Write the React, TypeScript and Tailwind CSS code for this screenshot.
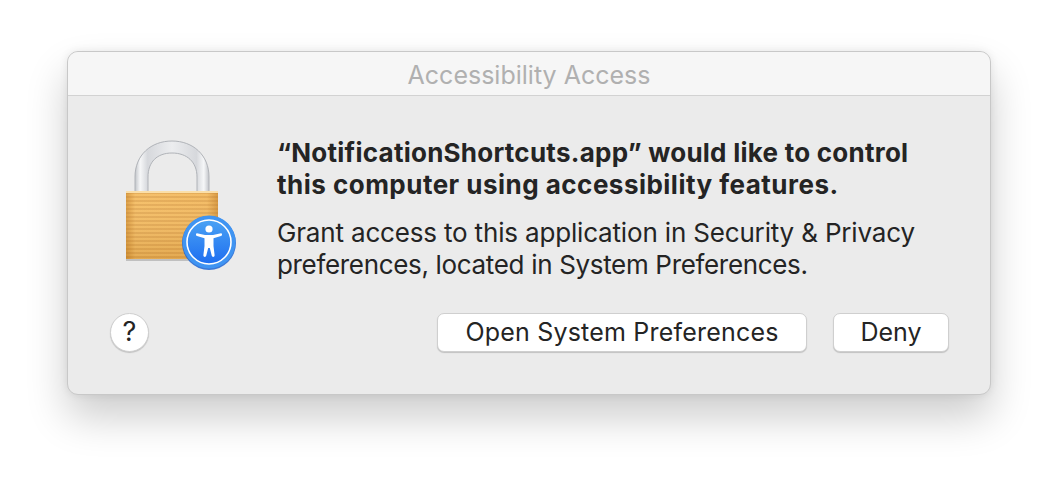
import React from "react";

const LockIcon = () => (
  <svg width="120" height="132" viewBox="0 0 120 132" className="block">
    <defs>
      <linearGradient id="shackle" x1="0" y1="0" x2="1" y2="0">
        <stop offset="0" stopColor="#c2c5ca" />
        <stop offset="0.07" stopColor="#f6f7f8" />
        <stop offset="0.17" stopColor="#d6d8dc" />
        <stop offset="0.5" stopColor="#ecedef" />
        <stop offset="0.83" stopColor="#d6d8dc" />
        <stop offset="0.93" stopColor="#f6f7f8" />
        <stop offset="1" stopColor="#c2c5ca" />
      </linearGradient>
      <linearGradient id="body" x1="0" y1="0" x2="1" y2="0">
        <stop offset="0" stopColor="#d9983a" />
        <stop offset="0.1" stopColor="#f5bd62" />
        <stop offset="0.88" stopColor="#f3b95e" />
        <stop offset="1" stopColor="#d69438" />
      </linearGradient>
      <linearGradient id="shade" x1="0" y1="0" x2="0" y2="1">
        <stop offset="0" stopColor="#ffffff" stopOpacity="0.05" />
        <stop offset="1" stopColor="#a86c1c" stopOpacity="0.22" />
      </linearGradient>
      <pattern id="ridges" width="4" height="4" patternUnits="userSpaceOnUse">
        <rect width="4" height="2" fill="#b06e20" opacity="0.24" />
      </pattern>
      <linearGradient id="badge" x1="0" y1="0" x2="0" y2="1">
        <stop offset="0" stopColor="#4aa2f4" />
        <stop offset="1" stopColor="#1e6ef0" />
      </linearGradient>
    </defs>
    <path d="M15 52 V37 C15 15 31 1 52 1 C73 1 89 15 89 37 V52 H77 V37 C77 22 67 13 52 13 C37 13 28 22 28 37 V52 Z" fill="url(#shackle)" stroke="#b0b3b8" strokeWidth="1" />
    <rect x="6" y="119" width="92" height="2" fill="#000000" opacity="0.18" />
    <rect x="6" y="51" width="92" height="68" fill="url(#body)" />
    <rect x="6" y="51" width="92" height="68" fill="url(#ridges)" />
    <rect x="6" y="51" width="92" height="68" fill="url(#shade)" />
    <rect x="6" y="51" width="92" height="2" fill="#fbdfa8" />
    <circle cx="89" cy="103" r="27" fill="#1c63d2" opacity="0.85" />
    <circle cx="89" cy="102" r="26.5" fill="#3f94f2" />
    <circle cx="89" cy="102" r="22" fill="url(#badge)" stroke="#ffffff" strokeWidth="1.6" />
    <circle cx="89" cy="89" r="3.6" fill="#ffffff" />
    <path d="M77 93.2 C75.8 93.2 75.5 95.6 77 96 L84.5 98.2 V106 L83.4 115 C83.2 117.2 85.8 117.6 86.3 115.6 L88.2 108 H89.8 L91.7 115.6 C92.2 117.6 94.8 117.2 94.6 115 L93.5 106 V98.2 L101 96 C102.5 95.6 102.2 93.2 101 93.2 L93 95 H85 Z" fill="#ffffff" />
  </svg>
);

const App = () => {
  return (
    <div className="w-[1058px] h-[478px] overflow-hidden bg-white pt-[51px] pl-[67px] font-['Inter','Liberation_Sans',sans-serif] text-[#242424]">
      <div className="w-[924px] h-[344px] rounded-[11px] border border-[#c8c8c8] bg-[#ebebeb] shadow-[0_22px_42px_rgba(0,0,0,0.2),0_0_8px_rgba(0,0,0,0.08)] overflow-hidden">
        <div className="h-[44px] pt-[4px] flex items-center justify-center border-b-[1.5px] border-[#d2d2d2] bg-[#f6f6f6] text-[25px] text-[#b0b0b0]">
          Accessibility Access
        </div>
        <div className="flex pt-[44px] pl-[52px]">
          <div className="w-[157px] shrink-0">
            <LockIcon />
          </div>
          <div className="-mt-[3px] text-[26px] leading-[32px]">
            <p className="font-bold">
              <span className="tracking-[0.25px]">“NotificationShortcuts.app” would like to control</span>
              <br />
              <span className="tracking-[0.48px]">this computer using accessibility features.</span>
            </p>
            <p className="mt-[16px]">
              <span className="tracking-[-0.17px]">Grant access to this application in Security &amp; Privacy</span>
              <br />
              <span className="tracking-[-0.33px]">preferences, located in System Preferences.</span>
            </p>
          </div>
        </div>
        <div className="flex items-center mt-[32px] pl-[42px] pr-[41px]">
          <button className="w-[39px] h-[39px] rounded-full bg-white border border-[#cfcfcf] shadow-[0_1px_1px_rgba(0,0,0,0.18)] text-[27px] flex items-center justify-center">
            ?
          </button>
          <button className="ml-auto w-[370px] h-[39px] rounded-[7px] bg-white border border-[#cfcfcf] shadow-[0_1px_1px_rgba(0,0,0,0.18)] text-[25px] tracking-[0.2px] flex items-center justify-center">
            Open System Preferences
          </button>
          <button className="ml-[26px] w-[116px] h-[39px] rounded-[7px] bg-white border border-[#cfcfcf] shadow-[0_1px_1px_rgba(0,0,0,0.18)] text-[25px] flex items-center justify-center">
            Deny
          </button>
        </div>
      </div>
    </div>
  );
};

export default App;
